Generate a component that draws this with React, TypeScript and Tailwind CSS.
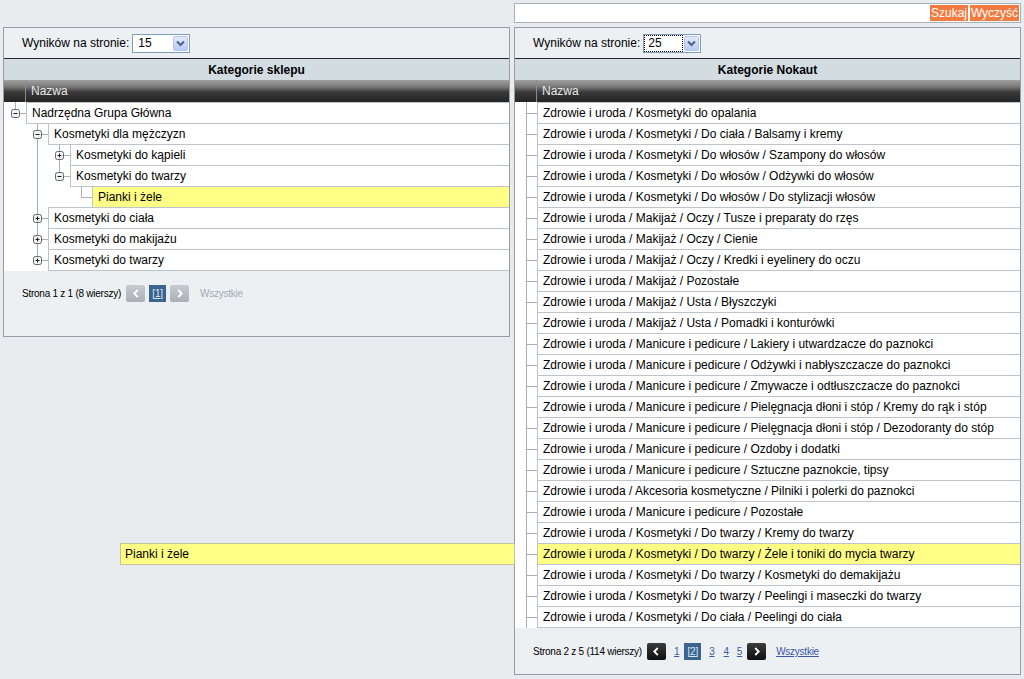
import React from "react";

type CellType = "none" | "line" | "tee" | "end";
type CellDef = { t: CellType; i?: "plus" | "minus" };

const LINE = "#a7afb7";

function Cell({ t, i }: CellDef) {
  return (
    <svg width="22" height="22" viewBox="0 0 22 22" className="block shrink-0">
      {(t === "line" || t === "tee") && <line x1="11.5" y1="0" x2="11.5" y2="22" stroke={LINE} />}
      {t === "end" && <line x1="11.5" y1="0" x2="11.5" y2="11.5" stroke={LINE} />}
      {(t === "tee" || t === "end") && <line x1="11.5" y1="11.5" x2="22" y2="11.5" stroke={LINE} />}
      {i && (
        <g>
          <rect x="7.5" y="7.5" width="8" height="8" rx="2" fill="#f2f2f2" stroke="#5f666e" />
          <line x1="9.5" y1="11.5" x2="13.5" y2="11.5" stroke="#1f2328" />
          {i === "plus" && <line x1="11.5" y1="9.5" x2="11.5" y2="13.5" stroke="#1f2328" />}
        </g>
      )}
    </svg>
  );
}

function Select({ value, focused }: { value: string; focused?: boolean }) {
  return (
    <div className="flex h-[19px] w-[58px] items-stretch border border-[#7f9db9] bg-white">
      <div className="flex flex-1 items-center p-px">
        <span
          className={
            focused
              ? "flex h-[15px] flex-1 items-center pl-[3px] text-[12px] leading-none text-black outline-1 outline-dotted outline-black"
              : "flex h-[15px] flex-1 items-center pl-[4px] text-[12px] leading-none text-black"
          }
        >
          {value}
        </span>
      </div>
      <div className="m-px flex w-[15px] items-center justify-center rounded-[2px] border border-[#b3c5ee] bg-[linear-gradient(#e2ebfe,#b8cbf7)]">
        <svg width="9" height="7" viewBox="0 0 9 7">
          <path d="M1 1.5 L4.5 5 L8 1.5" fill="none" stroke="#4d6185" strokeWidth="2" />
        </svg>
      </div>
    </div>
  );
}

function Toolbar({ value, focused }: { value: string; focused?: boolean }) {
  return (
    <div className="flex h-[30px] items-center pl-[18px] text-[12px] text-black">
      <span className="mr-[3px]">Wyników na stronie:</span>
      <Select value={value} focused={focused} />
    </div>
  );
}

function Headers({ title }: { title: string }) {
  return (
    <>
      <div className="flex h-[22px] items-center justify-center border-t border-[#23272b] bg-[#d2dce1] text-[12px] font-bold text-black">
        {title}
      </div>
      <div className="flex h-[22px] bg-[linear-gradient(#a0a0a0_0%,#7a7a7a_30%,#3a3a3a_55%,#242424_100%)] text-[12px] text-[#e8e8e8]">
        <div className="w-[22px] border-r border-[#8c8c8c]" />
        <div className="flex items-center pl-[5px]">Nazwa</div>
      </div>
    </>
  );
}

function Row({ cells, text, selected, first }: { cells: CellDef[]; text: string; selected?: boolean; first?: boolean }) {
  return (
    <div className={first ? "flex h-[22px]" : "-mt-px flex h-[22px]"}>
      {cells.map((c, k) => (
        <Cell key={k} t={c.t} i={c.i} />
      ))}
      <div
        className={
          selected
            ? "relative flex flex-1 items-center whitespace-nowrap border-y border-l border-[#bcc4cc] bg-[#ffff85] pl-[5px] text-[12px] text-black"
            : "relative flex flex-1 items-center whitespace-nowrap border-y border-l border-[#bcc4cc] bg-white pl-[5px] text-[12px] text-black"
        }
      >
        {text}
      </div>
    </div>
  );
}

function ArrowBtn({ dir, dark }: { dir: "l" | "r"; dark?: boolean }) {
  return (
    <div
      className={
        dark
          ? "flex h-[17px] w-[19px] items-center justify-center rounded-[2px] bg-[linear-gradient(#3c3c3c,#0e0e0e)]"
          : "flex h-[17px] w-[19px] items-center justify-center rounded-[2px] bg-[linear-gradient(#c8ccd0,#a9afb4)]"
      }
    >
      <svg width="8" height="9" viewBox="0 0 8 9">
        <path d={dir === "l" ? "M5.8 1 L2.3 4.5 L5.8 8" : "M2.2 1 L5.7 4.5 L2.2 8"} fill="none" stroke="white" strokeWidth="1.8" />
      </svg>
    </div>
  );
}

function CurPage({ n }: { n: string }) {
  return (
    <div className="flex h-[17px] w-[17px] items-center justify-center bg-[#3b6491] text-[10px] leading-none text-[#dde9f5] underline">
      {n}
    </div>
  );
}

const tree: { cells: CellDef[]; text: string; selected?: boolean }[] = [
  { cells: [{ t: "end", i: "minus" }], text: "Nadrzędna Grupa Główna" },
  { cells: [{ t: "none" }, { t: "tee", i: "minus" }], text: "Kosmetyki dla mężczyzn" },
  { cells: [{ t: "none" }, { t: "line" }, { t: "tee", i: "plus" }], text: "Kosmetyki do kąpieli" },
  { cells: [{ t: "none" }, { t: "line" }, { t: "end", i: "minus" }], text: "Kosmetyki do twarzy" },
  { cells: [{ t: "none" }, { t: "line" }, { t: "none" }, { t: "end" }], text: "Pianki i żele", selected: true },
  { cells: [{ t: "none" }, { t: "tee", i: "plus" }], text: "Kosmetyki do ciała" },
  { cells: [{ t: "none" }, { t: "tee", i: "plus" }], text: "Kosmetyki do makijażu" },
  { cells: [{ t: "none" }, { t: "end", i: "plus" }], text: "Kosmetyki do twarzy" },
];

const nokaut = [
  "Zdrowie i uroda / Kosmetyki do opalania",
  "Zdrowie i uroda / Kosmetyki / Do ciała / Balsamy i kremy",
  "Zdrowie i uroda / Kosmetyki / Do włosów / Szampony do włosów",
  "Zdrowie i uroda / Kosmetyki / Do włosów / Odżywki do włosów",
  "Zdrowie i uroda / Kosmetyki / Do włosów / Do stylizacji włosów",
  "Zdrowie i uroda / Makijaż / Oczy / Tusze i preparaty do rzęs",
  "Zdrowie i uroda / Makijaż / Oczy / Cienie",
  "Zdrowie i uroda / Makijaż / Oczy / Kredki i eyelinery do oczu",
  "Zdrowie i uroda / Makijaż / Pozostałe",
  "Zdrowie i uroda / Makijaż / Usta / Błyszczyki",
  "Zdrowie i uroda / Makijaż / Usta / Pomadki i konturówki",
  "Zdrowie i uroda / Manicure i pedicure / Lakiery i utwardzacze do paznokci",
  "Zdrowie i uroda / Manicure i pedicure / Odżywki i nabłyszczacze do paznokci",
  "Zdrowie i uroda / Manicure i pedicure / Zmywacze i odtłuszczacze do paznokci",
  "Zdrowie i uroda / Manicure i pedicure / Pielęgnacja dłoni i stóp / Kremy do rąk i stóp",
  "Zdrowie i uroda / Manicure i pedicure / Pielęgnacja dłoni i stóp / Dezodoranty do stóp",
  "Zdrowie i uroda / Manicure i pedicure / Ozdoby i dodatki",
  "Zdrowie i uroda / Manicure i pedicure / Sztuczne paznokcie, tipsy",
  "Zdrowie i uroda / Akcesoria kosmetyczne / Pilniki i polerki do paznokci",
  "Zdrowie i uroda / Manicure i pedicure / Pozostałe",
  "Zdrowie i uroda / Kosmetyki / Do twarzy / Kremy do twarzy",
  "Zdrowie i uroda / Kosmetyki / Do twarzy / Żele i toniki do mycia twarzy",
  "Zdrowie i uroda / Kosmetyki / Do twarzy / Kosmetyki do demakijażu",
  "Zdrowie i uroda / Kosmetyki / Do twarzy / Peelingi i maseczki do twarzy",
  "Zdrowie i uroda / Kosmetyki / Do ciała / Peelingi do ciała",
];

export default function App() {
  return (
    <div className="relative h-[679px] w-[1024px] overflow-hidden bg-[#e8ecef] font-['Liberation_Sans',Arial,sans-serif]">
      <div className="flex gap-[4px] pl-[3px] pt-[3px]">
        {/* Left column */}
        <div className="w-[507px] pt-[24px]">
          <div className="flex h-[310px] flex-col border border-[#959ba1] bg-[#ecf0f3]">
            <Toolbar value="15" />
            <Headers title="Kategorie sklepu" />
            <div className="bg-white">
              {tree.map((r, k) => (
                <Row key={k} cells={r.cells} text={r.text} selected={r.selected} first={k === 0} />
              ))}
            </div>
            <div className="flex items-center pl-[18px] pt-[14px] text-[10px] tracking-[-0.25px] text-black">
              <span>Strona 1 z 1 (8 wierszy)</span>
              <div className="ml-[5px]">
                <ArrowBtn dir="l" />
              </div>
              <div className="ml-[4px]">
                <CurPage n="[1]" />
              </div>
              <div className="ml-[4px]">
                <ArrowBtn dir="r" />
              </div>
              <span className="ml-[11px] text-[#a3abb3]">Wszystkie</span>
            </div>
          </div>
        </div>

        {/* Right column */}
        <div className="flex w-[507px] flex-col">
          <div className="mb-[4px] flex h-[20px] items-end justify-end border border-[#a9b1b8] bg-white pb-px pr-[1px]">
            <div className="flex h-[16px] gap-[2px] text-[12px] leading-none text-white">
              <div className="flex w-[38px] items-center justify-center bg-[#f47b3f]">Szukaj</div>
              <div className="flex w-[49px] items-center justify-center bg-[#f47b3f]">Wyczyść</div>
            </div>
          </div>
          <div className="flex flex-col border border-[#959ba1] bg-[#ecf0f3] pb-[14px]">
            <Toolbar value="25" focused />
            <Headers title="Kategorie Nokaut" />
            <div className="bg-white">
              {nokaut.map((t, k) => (
                <Row key={k} cells={[{ t: "tee" }]} text={t} selected={k === 21} first={k === 0} />
              ))}
            </div>
            <div className="flex items-center pl-[18px] pt-[15px] text-[10px] tracking-[-0.25px] text-black">
              <span>Strona 2 z 5 (114 wierszy)</span>
              <div className="ml-[5px]">
                <ArrowBtn dir="l" dark />
              </div>
              <span className="ml-[8px] text-[#3a5ea8] underline">1</span>
              <div className="ml-[5px]">
                <CurPage n="[2]" />
              </div>
              <span className="ml-[8px] text-[#3a5ea8] underline">3</span>
              <span className="ml-[9px] text-[#3a5ea8] underline">4</span>
              <span className="ml-[8px] text-[#3a5ea8] underline">5</span>
              <div className="ml-[5px]">
                <ArrowBtn dir="r" dark />
              </div>
              <span className="ml-[10px] text-[#3a54a8] underline">Wszystkie</span>
            </div>
          </div>
        </div>
      </div>

      {/* drag proxy */}
      <div className="absolute left-[120px] top-[543px] flex h-[22px] w-[395px] items-center border border-[#c4c49c] bg-[#ffff85] pl-[4px] text-[12px] text-black">
        Pianki i żele
      </div>
    </div>
  );
}
